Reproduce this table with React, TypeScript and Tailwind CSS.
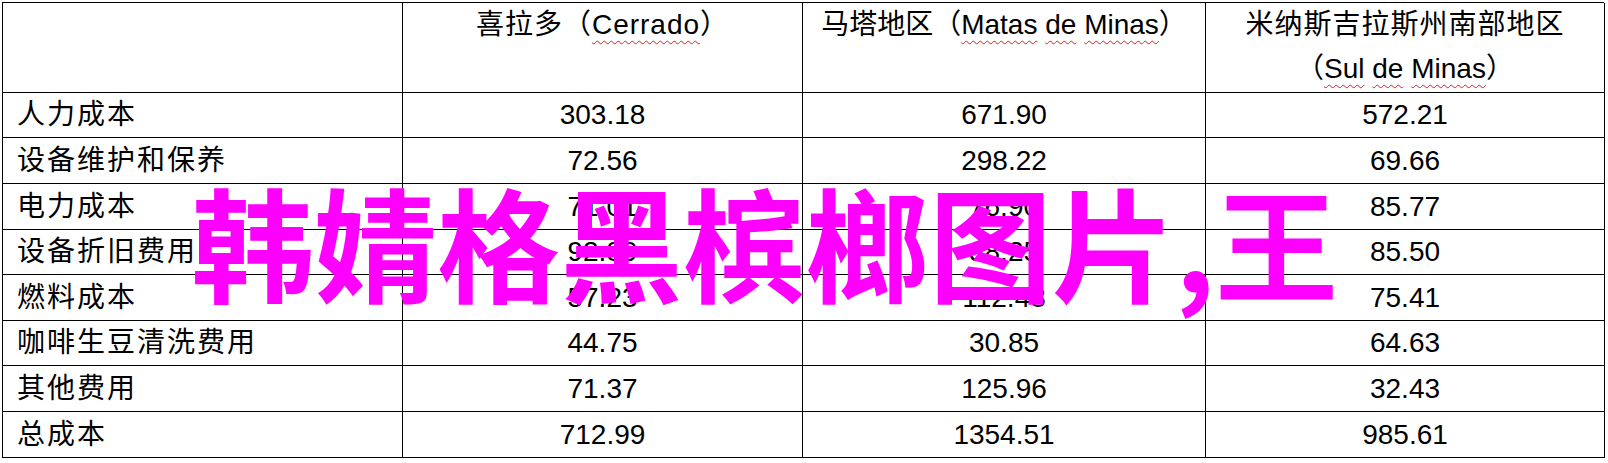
import React from "react";

const rows: [string, string, string, string][] = [
  ["人力成本", "303.18", "671.90", "572.21"],
  ["设备维护和保养", "72.56", "298.22", "69.66"],
  ["电力成本", "71.01", "76.90", "85.77"],
  ["设备折旧费用", "92.89", "38.25", "85.50"],
  ["燃料成本", "57.23", "112.48", "75.41"],
  ["咖啡生豆清洗费用", "44.75", "30.85", "64.63"],
  ["其他费用", "71.37", "125.96", "32.43"],
  ["总成本", "712.99", "1354.51", "985.61"],
];

const rowH = ["h-[45px]", "h-[46px]", "h-[46px]", "h-[45px]", "h-[46px]", "h-[45px]", "h-[46px]", "h-[46px]"];

const W = ({ children }: { children: React.ReactNode }) => (
  <span className="underline decoration-wavy decoration-[#e02020] decoration-1 underline-offset-[6px]">{children}</span>
);

export default function App() {
  return (
    <div
      className="relative w-[1608px] h-[463px] bg-white overflow-hidden text-black"
      style={{ fontFamily: '"Liberation Sans", "Noto Sans CJK SC", sans-serif' }}
    >
      <div className="ml-[2px] mt-[2px] w-[1602px] border-l border-t border-black grid grid-cols-[400px_400px_403px_399px] text-[28px]">
        {/* header */}
        <div className="h-[90px] border-r border-b border-black" />
        <div className="h-[90px] border-r border-b border-black text-center leading-[44px] tracking-[1px] whitespace-nowrap">
          喜拉多（<W>Cerrado</W>）
        </div>
        <div className="h-[90px] border-r border-b border-black text-center leading-[44px] whitespace-nowrap">
          马塔地区（<W>Matas</W> <W>de</W> <W>Minas</W>）
        </div>
        <div className="h-[90px] border-r border-b border-black text-center leading-[44px] whitespace-nowrap">
          <div className="tracking-[1px]">米纳斯吉拉斯州南部地区</div>
          <div>
            （<W>Sul</W> <W>de</W> <W>Minas</W>）
          </div>
        </div>
        {rows.map((r, i) => (
          <React.Fragment key={i}>
            <div className={`${rowH[i]} border-r border-b border-black flex items-center pl-[14px] tracking-[2px]`}>{r[0]}</div>
            <div className={`${rowH[i]} border-r border-b border-black flex items-center justify-center`}>{r[1]}</div>
            <div className={`${rowH[i]} border-r border-b border-black flex items-center justify-center`}>{r[2]}</div>
            <div className={`${rowH[i]} border-r border-b border-black flex items-center justify-center`}>{r[3]}</div>
          </React.Fragment>
        ))}
      </div>
      <div
        className="absolute left-[191px] top-[178px] text-[123px] leading-none font-bold text-[#ff00ff] whitespace-nowrap"
        style={{ fontFamily: '"Noto Sans CJK SC", sans-serif' }}
      >
        韩婧格黑槟榔图片,王
      </div>
    </div>
  );
}
